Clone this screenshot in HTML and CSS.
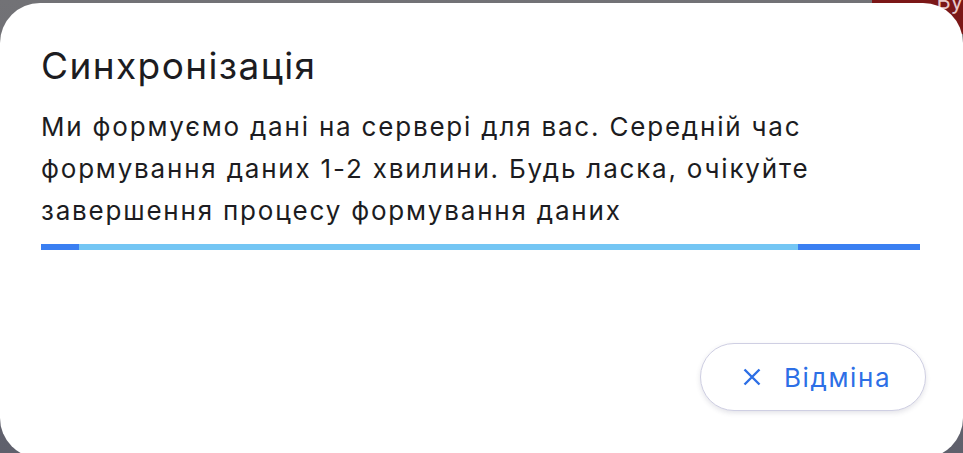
FILE: index.html
```html
<!DOCTYPE html>
<html lang="uk">
<head>
<meta charset="utf-8">
<link rel="stylesheet" href="styles.css">
</head>
<body>
<div class="backdrop">
  <div class="bg-strip"><span class="bg-text">Бу</span></div>
</div>
<div class="dialog">
  <h2 class="title">Синхронізація</h2>
  <p class="message">Ми формуємо дані на сервері для вас. Середній час формування даних 1-2 хвилини. Будь ласка, очікуйте завершення процесу формування даних</p>
  <div class="progress">
    <div class="seg seg-dark seg-a"></div>
    <div class="seg seg-light"></div>
    <div class="seg seg-dark seg-b"></div>
  </div>
  <div class="actions">
    <button class="cancel">
      <svg class="x-icon" viewBox="0 0 18 18" width="18" height="18"><path d="M1.5 1.5 L16.5 16.5 M16.5 1.5 L1.5 16.5" stroke="currentColor" stroke-width="2.4" fill="none"/></svg>
      <span>Відміна</span>
    </button>
  </div>
</div>
</body>
</html>
```
FILE: styles.css
```css
html, body {
  margin: 0;
  padding: 0;
  height: 100%;
  overflow: hidden;
}
body {
  background: linear-gradient(#727276, #5f606c);
  font-family: Inter, "Noto Sans", sans-serif;
  position: relative;
}
.backdrop {
  position: absolute;
  inset: 0;
  z-index: 0;
}
.bg-strip {
  position: absolute;
  right: 0;
  top: 0;
  width: 91px;
  height: 34px;
  background: #7b1717;
}
.bg-text {
  position: absolute;
  right: 0;
  top: -12px;
  color: #e8c8c8;
  font-size: 22px;
}
.dialog {
  position: relative;
  z-index: 1;
  margin-top: 3px;
  height: 455px;
  background: #ffffff;
  border-radius: 40px;
  padding: 41px 43px 0 41px;
  box-sizing: border-box;
  display: flex;
  flex-direction: column;
}
.title {
  margin: 0;
  font-size: 37px;
  font-weight: 400;
  line-height: 44px;
  color: #1c1c21;
  letter-spacing: 1.4px;
}
.message {
  margin: 18px 0 0 0;
  font-size: 26px;
  line-height: 42px;
  color: #1c1c21;
  letter-spacing: 1.8px;
}
.progress {
  margin-top: 12px;
  height: 6px;
  display: flex;
}
.seg { height: 100%; }
.seg-dark { background: #3a7ff2; }
.seg-a { width: 38px; }
.seg-light { flex: 1; background: #74c6f4; }
.seg-b { width: 122px; }
.actions {
  display: flex;
  justify-content: flex-end;
  margin-top: 93px;
  margin-right: -6px;
}
.cancel {
  display: flex;
  align-items: center;
  gap: 23px;
  height: 68px;
  width: 226px;
  padding: 0 0 0 42px;
  box-sizing: border-box;
  border: 1.5px solid #cfcfe3;
  border-radius: 34px;
  background: #ffffff;
  box-shadow: 0 2px 5px rgba(60, 60, 90, 0.14);
  color: #2d6fe6;
  font-family: Inter, "Noto Sans", sans-serif;
  font-size: 26px;
  letter-spacing: 1.6px;
  cursor: pointer;
}
.x-icon { flex: none; }
```
